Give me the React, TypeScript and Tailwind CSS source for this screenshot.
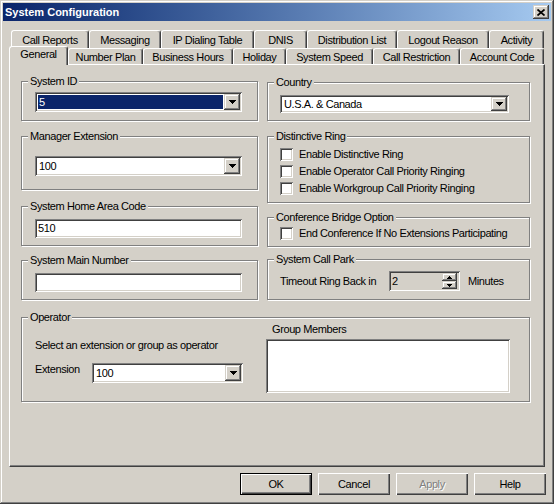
const sunken =
  'shadow-[inset_1px_1px_#808080,inset_-1px_-1px_#fff,inset_2px_2px_#404040,inset_-2px_-2px_#d4d0c8]'
const raised =
  'shadow-[inset_-1px_-1px_#404040,inset_1px_1px_#d4d0c8,inset_-2px_-2px_#808080,inset_2px_2px_#fff]'

const backRow: [string, string][] = [
  ['Call Reports', 'w-[78px]'],
  ['Messaging', 'w-[72px]'],
  ['IP Dialing Table', 'w-[93px]'],
  ['DNIS', 'w-[53px]'],
  ['Distribution List', 'w-[90px]'],
  ['Logout Reason', 'w-[92px]'],
  ['Activity', 'w-[55px]'],
]

const frontRow: [string, string][] = [
  ['Number Plan', 'w-[75px]'],
  ['Business Hours', 'w-[90px]'],
  ['Holiday', 'w-[53px]'],
  ['System Speed', 'w-[87px]'],
  ['Call Restriction', 'w-[87px]'],
  ['Account Code', 'w-[84px]'],
]

const tabEdge =
  'border-t border-l border-r border-t-white border-l-white border-r-[#404040] rounded-t-[3px] shadow-[inset_-1px_0_#808080] bg-[#d4d0c8] text-center whitespace-nowrap'

function Arrow({ down = true, w = 7 }: { down?: boolean; w?: number }) {
  const h = Math.ceil(w / 2)
  return (
    <svg width={w} height={h} viewBox={`0 0 ${w} ${h}`} shapeRendering="crispEdges">
      <polygon points={down ? `0,0 ${w},0 ${w / 2},${h}` : `0,${h} ${w},${h} ${w / 2},0`} fill="#000" />
    </svg>
  )
}

function Group({
  label,
  className,
  children,
}: {
  label: string
  className: string
  children?: React.ReactNode
}) {
  return (
    <div className={`relative border border-[#808080] shadow-[1px_1px_0_#fff,inset_1px_1px_0_#fff] ${className}`}>
      <span className="absolute left-[6px] -top-[7px] bg-[#d4d0c8] px-[2px] leading-[13px] whitespace-nowrap">
        {label}
      </span>
      {children}
    </div>
  )
}

function Combo({
  value,
  className,
  selected,
}: {
  value: string
  className: string
  selected?: boolean
}) {
  return (
    <div className={`flex bg-white p-[2px] ${sunken} ${className}`}>
      <div
        className={`flex flex-1 items-center pl-[1px] ${
          selected ? 'm-[1px] bg-[#0a246a] text-white' : 'pl-[2px]'
        }`}
      >
        {value}
      </div>
      <div className={`flex w-[16px] items-center justify-center bg-[#d4d0c8] ${raised}`}>
        <Arrow />
      </div>
    </div>
  )
}

function TextBox({ value }: { value?: string }) {
  return (
    <div className={`flex h-[19px] w-[207px] items-center bg-white pl-[3px] ${sunken}`}>{value}</div>
  )
}

function Check({ label }: { label: string }) {
  return (
    <div className="flex h-[13px] items-center gap-[6px] whitespace-nowrap">
      <div className={`h-[13px] w-[13px] shrink-0 bg-white ${sunken}`} />
      <span>{label}</span>
    </div>
  )
}

function Button({ label, primary, disabled }: { label: string; primary?: boolean; disabled?: boolean }) {
  return (
    <div
      className={`flex h-[22px] w-[72px] items-center justify-center ${
        primary
          ? 'border border-black shadow-[inset_1px_1px_#fff,inset_-1px_-1px_#404040,inset_-2px_-2px_#808080]'
          : 'shadow-[inset_1px_1px_#fff,inset_-1px_-1px_#404040,inset_-2px_-2px_#808080]'
      } ${disabled ? 'text-[#808080] [text-shadow:1px_1px_0_#fff]' : ''}`}
    >
      {label}
    </div>
  )
}

export default function App() {
  return (
    <div
      className={`h-[504px] w-[554px] bg-[#d4d0c8] p-[3px] font-['Liberation_Sans',Arial,sans-serif] text-[11px] leading-[13px] tracking-[-0.4px] text-black shadow-[inset_-1px_-1px_#404040,inset_1px_1px_#d4d0c8,inset_-2px_-2px_#808080,inset_2px_2px_#fff]`}
    >
      {/* title bar */}
      <div className="flex h-[18px] items-center justify-between bg-linear-to-r from-[#0a246a] to-[#a6caf0] pl-[2px]">
        <span className="font-bold tracking-normal text-white">System Configuration</span>
        <div className={`mr-[2px] flex h-[14px] w-[16px] items-center justify-center bg-[#d4d0c8] ${raised}`}>
          <svg width="8" height="7" viewBox="0 0 8 7">
            <path d="M0.5 0.5 L7.5 6.5 M7.5 0.5 L0.5 6.5" stroke="#000" strokeWidth="1.7" />
          </svg>
        </div>
      </div>

      <div className="px-[6px] pt-[9px]">
        {/* tabs */}
        <div>
          <div className="flex h-[18px] pl-[2px]">
            {backRow.map(([t, w]) => (
              <div key={t} className={`${tabEdge} ${w} h-[18px] pt-[3px]`}>
                {t}
              </div>
            ))}
          </div>
          <div className="flex h-[16px] items-end">
            <div className={`${tabEdge} relative z-10 -mb-[1px] h-[19px] w-[59px] pt-[1px]`}>General</div>
            {frontRow.map(([t, w]) => (
              <div key={t} className={`${tabEdge} ${w} h-[16px] pt-[2px]`}>
                {t}
              </div>
            ))}
          </div>
        </div>

        {/* tab page */}
        <div className="h-[403px] border border-t-white border-r-[#404040] border-b-[#404040] border-l-white px-[11px] shadow-[inset_-1px_-1px_#808080]">
          <div className="flex gap-[9px]">
            <div className="flex w-[237px] flex-col">
              <Group label="System ID" className="mt-[16px] h-[40px] pt-[10px] pl-[13px]">
                <Combo value="5" selected className="h-[20px] w-[207px]" />
              </Group>
              <Group label="Manager Extension" className="mt-[15px] h-[54px] pt-[19px] pl-[13px]">
                <Combo value="100" className="h-[20px] w-[207px]" />
              </Group>
              <Group label="System Home Area Code" className="mt-[16px] h-[40px] pt-[12px] pl-[13px]">
                <TextBox value="510" />
              </Group>
              <Group label="System Main Number" className="mt-[14px] h-[40px] pt-[12px] pl-[13px]">
                <TextBox />
              </Group>
            </div>

            <div className="flex w-[263px] flex-col">
              <Group label="Country" className="mt-[17px] h-[39px] pt-[12px] pl-[12px]">
                <Combo value="U.S.A. & Canada" className="h-[18px] w-[229px]" />
              </Group>
              <Group label="Distinctive Ring" className="mt-[15px] h-[67px] pt-[11px] pl-[12px]">
                <div className="flex flex-col gap-[4px]">
                  <Check label="Enable Distinctive Ring" />
                  <Check label="Enable Operator Call Priority Ringing" />
                  <Check label="Enable Workgroup Call Priority Ringing" />
                </div>
              </Group>
              <Group label="Conference Bridge Option" className="mt-[14px] h-[30px] pt-[9px] pl-[12px]">
                <Check label="End Conference If No Extensions Participating" />
              </Group>
              <Group label="System Call Park" className="mt-[12px] h-[41px] pt-[11px] pl-[12px]">
                <div className="flex items-center whitespace-nowrap">
                  <span className="w-[109px]">Timeout Ring Back in</span>
                  <div className={`flex h-[20px] w-[71px] items-center p-[2px] ${sunken}`}>
                    <span className="flex-1 pl-[1px]">2</span>
                    <div className="mr-[1px] flex h-[16px] w-[15px] flex-col">
                      <div className={`flex flex-1 items-center justify-center ${raised}`}>
                        <Arrow down={false} w={5} />
                      </div>
                      <div className={`flex flex-1 items-center justify-center ${raised}`}>
                        <Arrow w={5} />
                      </div>
                    </div>
                  </div>
                  <span className="ml-[8px]">Minutes</span>
                </div>
              </Group>
            </div>
          </div>

          <Group label="Operator" className="mt-[17px] flex h-[85px] w-[509px] pl-[13px]">
            <div className="w-[231px] pt-[21px]">
              <div className="whitespace-nowrap">Select an extension or group as operator</div>
              <div className="mt-[11px] flex items-start">
                <span className="w-[57px]">Extension</span>
                <Combo value="100" className="h-[20px] w-[151px]" />
              </div>
            </div>
            <div className="pt-[5px]">
              <div className="pl-[6px]">Group Members</div>
              <div className={`mt-[3px] h-[54px] w-[244px] bg-white ${sunken}`} />
            </div>
          </Group>
        </div>

        {/* buttons */}
        <div className="-mr-[1px] mt-[6px] flex justify-end gap-[6px]">
          <Button label="OK" primary />
          <Button label="Cancel" />
          <Button label="Apply" disabled />
          <Button label="Help" />
        </div>
      </div>
    </div>
  )
}
